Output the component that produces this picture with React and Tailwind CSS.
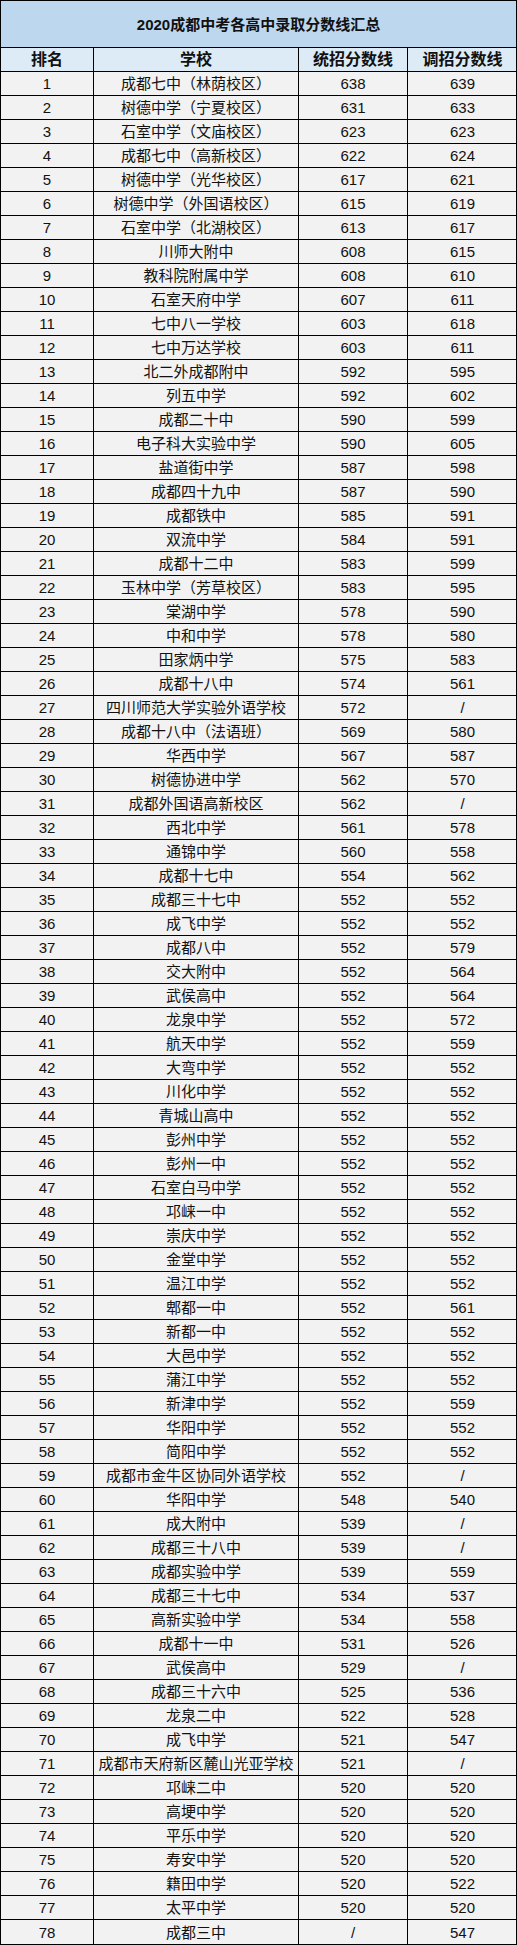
const rows = [
  ["1", "成都七中（林荫校区）", "638", "639"],
  ["2", "树德中学（宁夏校区）", "631", "633"],
  ["3", "石室中学（文庙校区）", "623", "623"],
  ["4", "成都七中（高新校区）", "622", "624"],
  ["5", "树德中学（光华校区）", "617", "621"],
  ["6", "树德中学（外国语校区）", "615", "619"],
  ["7", "石室中学（北湖校区）", "613", "617"],
  ["8", "川师大附中", "608", "615"],
  ["9", "教科院附属中学", "608", "610"],
  ["10", "石室天府中学", "607", "611"],
  ["11", "七中八一学校", "603", "618"],
  ["12", "七中万达学校", "603", "611"],
  ["13", "北二外成都附中", "592", "595"],
  ["14", "列五中学", "592", "602"],
  ["15", "成都二十中", "590", "599"],
  ["16", "电子科大实验中学", "590", "605"],
  ["17", "盐道街中学", "587", "598"],
  ["18", "成都四十九中", "587", "590"],
  ["19", "成都铁中", "585", "591"],
  ["20", "双流中学", "584", "591"],
  ["21", "成都十二中", "583", "599"],
  ["22", "玉林中学（芳草校区）", "583", "595"],
  ["23", "棠湖中学", "578", "590"],
  ["24", "中和中学", "578", "580"],
  ["25", "田家炳中学", "575", "583"],
  ["26", "成都十八中", "574", "561"],
  ["27", "四川师范大学实验外语学校", "572", "/"],
  ["28", "成都十八中（法语班）", "569", "580"],
  ["29", "华西中学", "567", "587"],
  ["30", "树德协进中学", "562", "570"],
  ["31", "成都外国语高新校区", "562", "/"],
  ["32", "西北中学", "561", "578"],
  ["33", "通锦中学", "560", "558"],
  ["34", "成都十七中", "554", "562"],
  ["35", "成都三十七中", "552", "552"],
  ["36", "成飞中学", "552", "552"],
  ["37", "成都八中", "552", "579"],
  ["38", "交大附中", "552", "564"],
  ["39", "武侯高中", "552", "564"],
  ["40", "龙泉中学", "552", "572"],
  ["41", "航天中学", "552", "559"],
  ["42", "大弯中学", "552", "552"],
  ["43", "川化中学", "552", "552"],
  ["44", "青城山高中", "552", "552"],
  ["45", "彭州中学", "552", "552"],
  ["46", "彭州一中", "552", "552"],
  ["47", "石室白马中学", "552", "552"],
  ["48", "邛崃一中", "552", "552"],
  ["49", "崇庆中学", "552", "552"],
  ["50", "金堂中学", "552", "552"],
  ["51", "温江中学", "552", "552"],
  ["52", "郫都一中", "552", "561"],
  ["53", "新都一中", "552", "552"],
  ["54", "大邑中学", "552", "552"],
  ["55", "蒲江中学", "552", "552"],
  ["56", "新津中学", "552", "559"],
  ["57", "华阳中学", "552", "552"],
  ["58", "简阳中学", "552", "552"],
  ["59", "成都市金牛区协同外语学校", "552", "/"],
  ["60", "华阳中学", "548", "540"],
  ["61", "成大附中", "539", "/"],
  ["62", "成都三十八中", "539", "/"],
  ["63", "成都实验中学", "539", "559"],
  ["64", "成都三十七中", "534", "537"],
  ["65", "高新实验中学", "534", "558"],
  ["66", "成都十一中", "531", "526"],
  ["67", "武侯高中", "529", "/"],
  ["68", "成都三十六中", "525", "536"],
  ["69", "龙泉二中", "522", "528"],
  ["70", "成飞中学", "521", "547"],
  ["71", "成都市天府新区麓山光亚学校", "521", "/"],
  ["72", "邛崃二中", "520", "520"],
  ["73", "高埂中学", "520", "520"],
  ["74", "平乐中学", "520", "520"],
  ["75", "寿安中学", "520", "520"],
  ["76", "籍田中学", "520", "522"],
  ["77", "太平中学", "520", "520"],
  ["78", "成都三中", "/", "547"],
];

const cols = "grid grid-cols-[93px_205px_109px_109px]";
const cell = "flex items-center justify-center border-r border-black whitespace-nowrap";

export default function App() {
  return (
    <div
      className="w-[517px] text-[15px] text-[#111] leading-none"
      style={{ fontFamily: '"Liberation Sans", "Noto Sans CJK SC", sans-serif' }}
    >
      <div className="border border-black">
        {/* title */}
        <div className="h-[47px] bg-[#bdd7ee] border-b border-black flex items-center justify-center font-bold text-[15px]">
          2020成都中考各高中录取分数线汇总
        </div>

        {/* header */}
        <div className={`${cols} h-[24px] bg-[#ddebf7] border-b border-black font-bold text-[16px]`}>
          <div className={cell}>排名</div>
          <div className={cell}>学校</div>
          <div className={cell}>统招分数线</div>
          <div className="flex items-center justify-center">调招分数线</div>
        </div>

        {rows.map((r, i) => (
          <div
            key={r[0]}
            className={`${cols} h-[24px] bg-[#f2f2f2] ${i < rows.length - 1 ? "border-b border-black" : ""}`}
          >
            <div className={cell}>{r[0]}</div>
            <div className={cell}>{r[1]}</div>
            <div className={cell}>{r[2]}</div>
            <div className="flex items-center justify-center">{r[3]}</div>
          </div>
        ))}
      </div>
    </div>
  );
}
